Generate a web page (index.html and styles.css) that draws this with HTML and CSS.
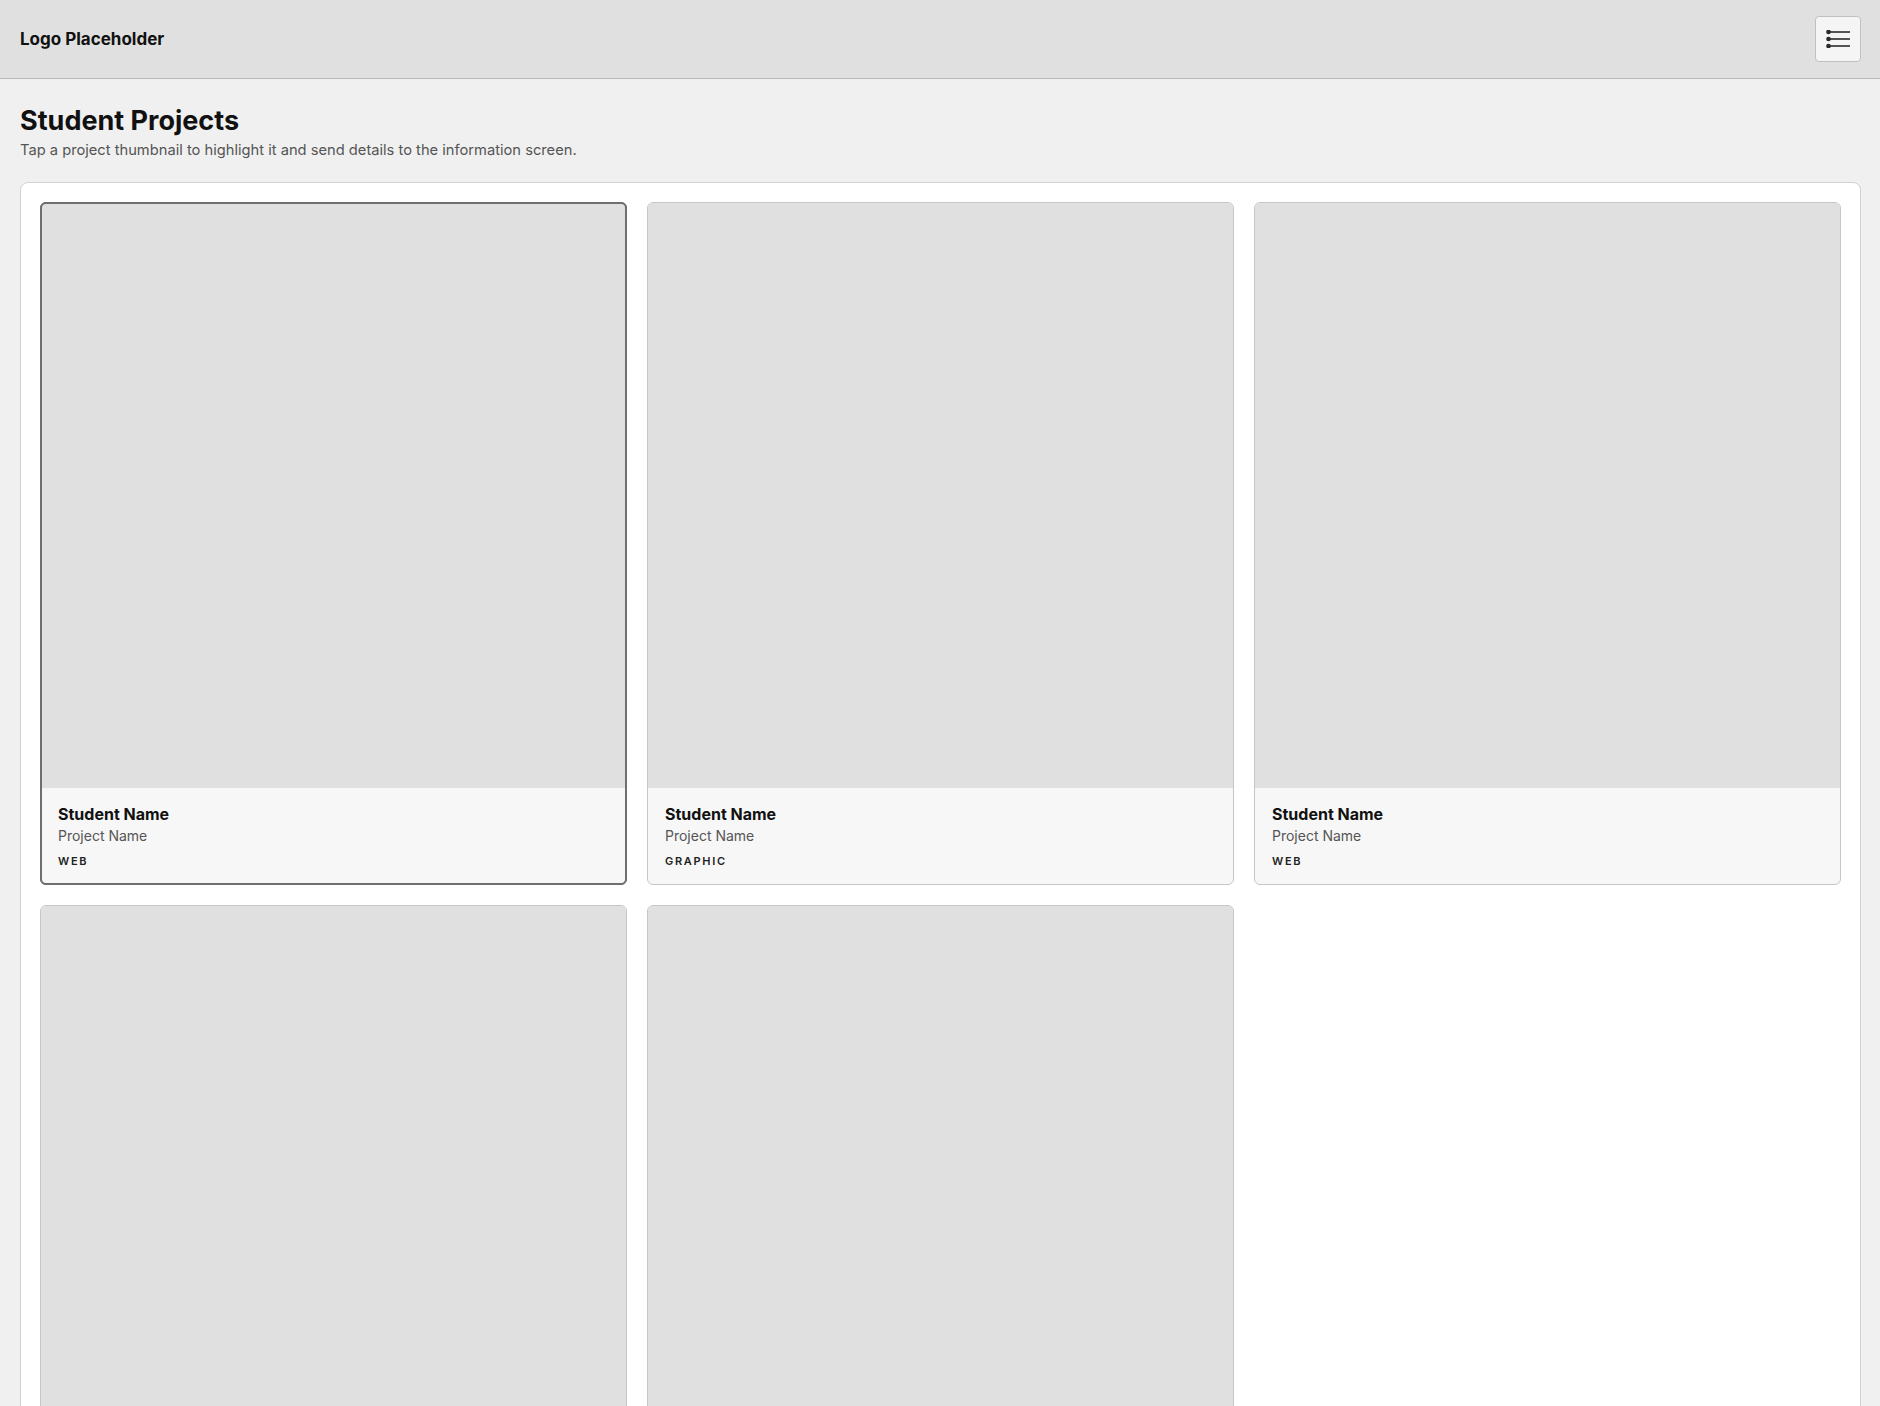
FILE: index.html
```html
<!DOCTYPE html>
<html lang="en">
<head>
  <meta charset="UTF-8" />
  <meta name="viewport" content="width=device-width, initial-scale=1.0"/>
  <title>Student Projects</title>
  <link rel="stylesheet" href="styles.css">
</head>
<body>

  <header class="topbar">
    <div class="logo">Logo Placeholder</div>
    <button type="button" class="menu-btn" aria-label="Menu">
      <svg width="24" height="18" viewBox="0 0 24 18">
        <g fill="#2a2a2a">
          <circle cx="2.5" cy="2" r="2.3"/>
          <circle cx="2.5" cy="9" r="2.3"/>
          <circle cx="2.5" cy="16" r="2.3"/>
        </g>
        <g stroke="#2a2a2a" stroke-width="1.6">
          <line x1="3" y1="2" x2="24" y2="2"/>
          <line x1="3" y1="9" x2="24" y2="9"/>
          <line x1="3" y1="16" x2="24" y2="16"/>
        </g>
      </svg>
    </button>
  </header>

  <main class="page">
    <h1>Student Projects</h1>
    <p class="intro">Tap a project thumbnail to highlight it and send details to the information screen.</p>

    <section class="gallery">
      <div class="card selected">
        <div class="thumb"></div>
        <div class="info">
          <div class="student">Student Name</div>
          <div class="project">Project Name</div>
          <div class="tag">WEB</div>
        </div>
      </div>
      <div class="card">
        <div class="thumb"></div>
        <div class="info">
          <div class="student">Student Name</div>
          <div class="project">Project Name</div>
          <div class="tag">GRAPHIC</div>
        </div>
      </div>
      <div class="card">
        <div class="thumb"></div>
        <div class="info">
          <div class="student">Student Name</div>
          <div class="project">Project Name</div>
          <div class="tag">WEB</div>
        </div>
      </div>
      <div class="card">
        <div class="thumb"></div>
        <div class="info">
          <div class="student">Student Name</div>
          <div class="project">Project Name</div>
          <div class="tag">GRAPHIC</div>
        </div>
      </div>
      <div class="card">
        <div class="thumb"></div>
        <div class="info">
          <div class="student">Student Name</div>
          <div class="project">Project Name</div>
          <div class="tag">WEB</div>
        </div>
      </div>
    </section>
  </main>

</body>
</html>
```

FILE: styles.css
```css
* {
  box-sizing: border-box;
}

body {
  margin: 0;
  font-family: Inter, "Noto Sans", sans-serif;
  background: #f0f0f0;
  color: #111;
}

.topbar {
  height: 79px;
  display: flex;
  justify-content: space-between;
  align-items: center;
  padding: 0 19px 0 20px;
  background: #e0e0e0;
  border-bottom: 1px solid #b9b9b9;
}

.logo {
  font-weight: 700;
  font-size: 17px;
}

.menu-btn {
  width: 46px;
  height: 46px;
  display: flex;
  justify-content: center;
  align-items: center;
  padding: 0;
  background: #f5f5f5;
  border: 1px solid #c0c0c0;
  border-radius: 4px;
  cursor: pointer;
}

.page {
  padding: 24px 19px 0 20px;
}

h1 {
  margin: 0;
  padding-top: 1px;
  font-size: 27px;
  font-weight: 700;
  line-height: 34px;
}

.intro {
  margin: 2px 0 0;
  font-size: 14.7px;
  line-height: 20px;
  color: #555;
}

.gallery {
  margin-top: 22px;
  background: #fff;
  border: 1px solid #d2d2d2;
  border-radius: 8px;
  padding: 19px;
  display: grid;
  grid-template-columns: repeat(3, 1fr);
  gap: 20px;
}

.card {
  border: 1px solid #c6c6c6;
  border-radius: 6px;
  overflow: hidden;
  background: #f7f7f7;
}

.card.selected {
  border-color: #6f6f6f;
  outline: 2px solid #6f6f6f;
  outline-offset: -2px;
}

.thumb {
  aspect-ratio: 1 / 1;
  background: #e0e0e0;
}

.info {
  padding: 15px 17px 16px;
}

.student {
  font-size: 16px;
  font-weight: 700;
  line-height: 22px;
}

.project {
  font-size: 14px;
  line-height: 20px;
  color: #555;
  margin-top: 1px;
}

.tag {
  font-size: 11px;
  font-weight: 600;
  letter-spacing: 1.7px;
  line-height: 14px;
  margin-top: 8px;
  color: #222;
}
```
